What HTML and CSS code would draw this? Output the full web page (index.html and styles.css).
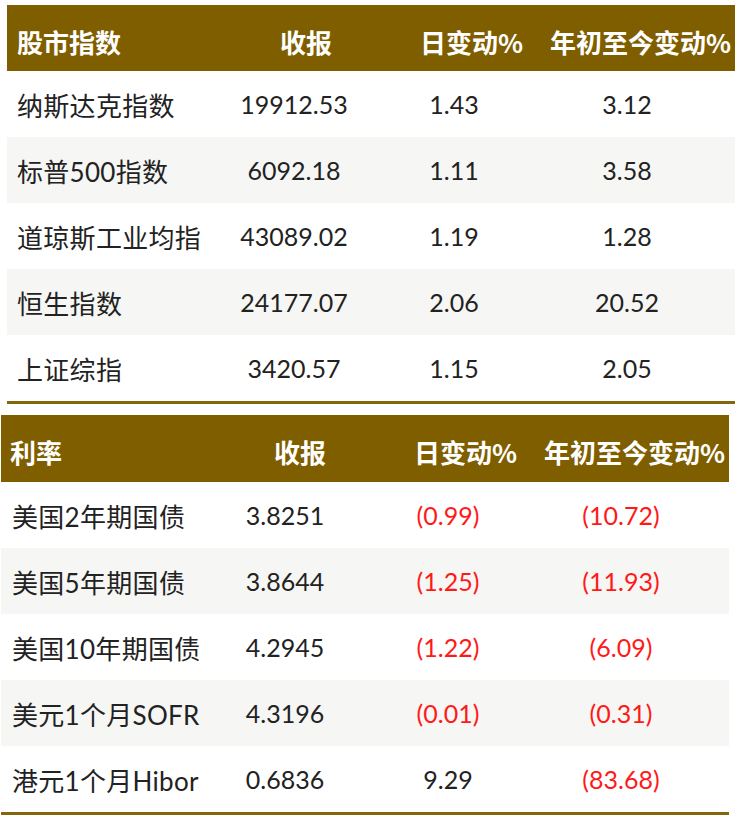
FILE: index.html
```html
<!DOCTYPE html>
<html lang="zh-CN">
<head>
<meta charset="utf-8">
<title>市场数据</title>
<link rel="stylesheet" href="styles.css">
</head>
<body>
<div class="page">
  <section class="table t-index">
    <div class="head">
      <div class="h">股市指数</div>
      <div class="h">收报</div>
      <div class="h">日变动%</div>
      <div class="h">年初至今变动%</div>
    </div>
    <div class="row"><div class="name">纳斯达克指数</div><div class="num">19912.53</div><div class="num">1.43</div><div class="num">3.12</div></div>
    <div class="row"><div class="name">标普500指数</div><div class="num">6092.18</div><div class="num">1.11</div><div class="num">3.58</div></div>
    <div class="row"><div class="name">道琼斯工业均指</div><div class="num">43089.02</div><div class="num">1.19</div><div class="num">1.28</div></div>
    <div class="row"><div class="name">恒生指数</div><div class="num">24177.07</div><div class="num">2.06</div><div class="num">20.52</div></div>
    <div class="row"><div class="name">上证综指</div><div class="num">3420.57</div><div class="num">1.15</div><div class="num">2.05</div></div>
  </section>

  <section class="table t-rate">
    <div class="head">
      <div class="h">利率</div>
      <div class="h">收报</div>
      <div class="h">日变动%</div>
      <div class="h">年初至今变动%</div>
    </div>
    <div class="row"><div class="name">美国2年期国债</div><div class="num">3.8251</div><div class="num neg">(0.99)</div><div class="num neg">(10.72)</div></div>
    <div class="row"><div class="name">美国5年期国债</div><div class="num">3.8644</div><div class="num neg">(1.25)</div><div class="num neg">(11.93)</div></div>
    <div class="row"><div class="name">美国10年期国债</div><div class="num">4.2945</div><div class="num neg">(1.22)</div><div class="num neg">(6.09)</div></div>
    <div class="row"><div class="name">美元1个月SOFR</div><div class="num">4.3196</div><div class="num neg">(0.01)</div><div class="num neg">(0.31)</div></div>
    <div class="row"><div class="name">港元1个月Hibor</div><div class="num">0.6836</div><div class="num">9.29</div><div class="num neg">(83.68)</div></div>
  </section>
</div>
</body>
</html>
```

FILE: styles.css
```css
html, body {
  margin: 0;
  padding: 0;
  background: #ffffff;
}

body {
  font-family: "Lato", "Noto Sans CJK SC", sans-serif;
  color: #222222;
}

.page {
  display: flex;
  flex-direction: column;
  padding-top: 5px;
}

.table {
  width: 728px;
  display: flex;
  flex-direction: column;
  border-bottom: 3px solid #86660c;
}

.t-index {
  margin-left: 7px;
}

.t-rate {
  margin-left: 1px;
  margin-top: 11px;
}

.head {
  display: grid;
  grid-template-columns: 273px 140px 130px 185px;
  height: 66px;
  background: #7f5e00;
  overflow: hidden;
}

.t-rate .head {
  height: 67px;
}

.h {
  display: flex;
  align-items: center;
  padding-top: 6px;
  box-sizing: border-box;
  font-family: "Noto Sans CJK SC", sans-serif;
  font-weight: 700;
  font-size: 26px;
  color: #ffffff;
  white-space: nowrap;
}

.head .h:first-child {
  padding-left: 10px;
}

.t-rate .head .h:first-child {
  padding-left: 9px;
}

.row {
  display: grid;
  grid-template-columns: 227px 120px 200px 146px;
  padding-right: 35px;
  height: 66px;
  align-items: center;
  background: #ffffff;
}

.row:nth-child(odd) {
  background: #f6f6f4;
}

.name {
  padding-left: 10px;
  font-size: 26px;
  white-space: nowrap;
  letter-spacing: 0.3px;
}

.t-rate .name {
  padding-left: 11px;
}

.num {
  text-align: center;
  font-size: 25px;
  white-space: nowrap;
}

.t-rate .row .num:nth-child(2) {
  padding-right: 6px;
}

.neg {
  color: #ff1a1a;
}
```
